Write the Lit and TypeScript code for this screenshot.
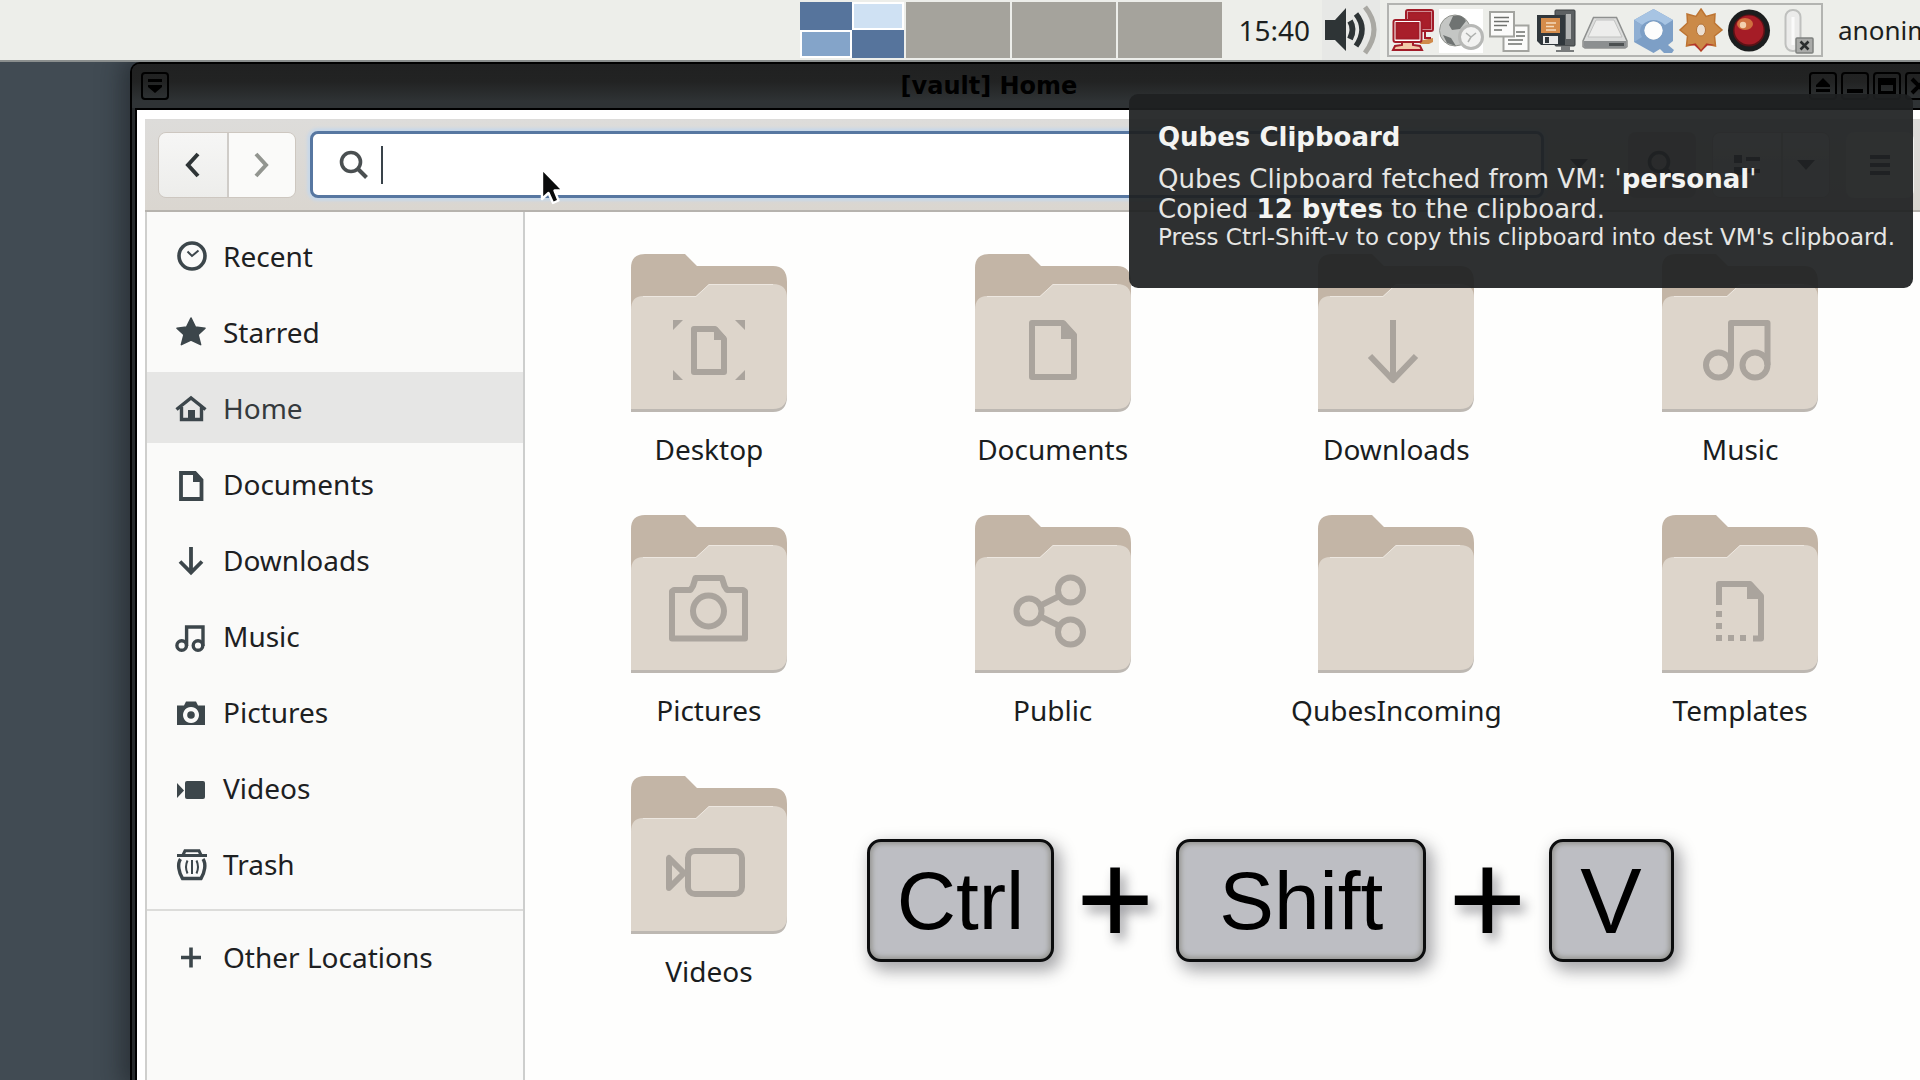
import { LitElement, html, css, svg, nothing } from "lit";
import { customElement, property } from "lit/decorators.js";
import { classMap } from "lit/directives/class-map.js";

/* ---------- glyphs ---------- */

const placeIcons: Record<string, unknown> = {
  recent: svg`<circle cx="17" cy="16" r="13" fill="none" stroke="currentColor" stroke-width="3.6"/>
    <path d="M12.5 11.5 17 16 23.5 10.5" fill="none" stroke="currentColor" stroke-width="2"/>`,
  starred: svg`<path d="M16 2 20.4 11 30 12.2 23 18.6 25.6 28.6 16 24 6.4 28.6 9 18.6 2 12.2 11.6 11Z" fill="currentColor" stroke="currentColor" stroke-width="1.6" stroke-linejoin="round"/>`,
  home: svg`<path d="M1.5 17.5 16 6 30.5 17.5M6.5 15V27.5H26.5V15" fill="none" stroke="currentColor" stroke-width="3.4"/>
    <path d="M13 18h7v10h-7z" fill="currentColor"/>`,
  documents: svg`<path d="M6 5H20L26.5 12V31H6Z" fill="none" stroke="currentColor" stroke-width="3.8"/>
    <path d="M18 4h3l7 8v2H18z" fill="currentColor"/>`,
  downloads: svg`<path d="M16 3V28M5 17.5 16 28.5 27 17.5" fill="none" stroke="currentColor" stroke-width="3.8"/>`,
  music: svg`<g fill="none" stroke="currentColor" stroke-width="3.4"><circle cx="6.7" cy="25.5" r="4.8"/><circle cx="23" cy="25.5" r="4.8"/><path d="M11.6 26V7H28V26"/></g>`,
  pictures: svg`<path fill-rule="evenodd" d="M2 9.5H9L11 5.5H21L23 9.5H30V29H2ZM16 11a8 8 0 1 0 .01 0Z" fill="currentColor"/><circle cx="16" cy="19" r="3.8" fill="currentColor"/>`,
  videos: svg`<rect x="10" y="9" width="20" height="18" rx="2" fill="currentColor"/><path d="M2 11V26L9 18.5Z" fill="currentColor"/>`,
  trash: svg`<path d="M2 7.5H32M8 7 10 2.8H24L26 7" fill="none" stroke="currentColor" stroke-width="3"/>
    <path d="M5.5 11C2 16 4 25 7.5 30.5H26C29.5 25 31.5 16 28 11" fill="none" stroke="currentColor" stroke-width="3.4"/>
    <path d="M12.5 12.5q-3 6.5 0 13M17 12v14M21.5 12.5q3 6.5 0 13" fill="none" stroke="currentColor" stroke-width="2"/>`,
  plus: svg`<path d="M16 6.5V26.5M6 16.5H26" fill="none" stroke="currentColor" stroke-width="3.6"/>`,
};

const folderMarks: Record<string, unknown> = {
  desktop: svg`<path d="M63 75H84L93 85V118H63Z"/><path class="solid" d="M83 73h3l9 10v3H83zM42 66h10l-10 10zM114 66h-10l10 10zM42 126h10l-10-10zM114 126h-10l10-10z"/>`,
  documents: svg`<path d="M57 69H88L99 81V123H57Z"/><path class="solid" d="M86 67h4l12 14v4H86z"/>`,
  downloads: svg`<path d="M75 66V124M52 102 75 126 98 102"/>`,
  music: svg`<circle cx="56.5" cy="111" r="12.5"/><circle cx="93" cy="111" r="12.5"/><path d="M69 111V69H105.5V111"/>`,
  pictures: svg`<path d="M41 123.5V76.5L43 75H59.5L62 71 64.5 63H91L93.5 71 96 75H112L114 76.5V123.5Z"/><circle cx="77.5" cy="96" r="15.5"/>`,
  public: svg`<circle cx="54" cy="96" r="12.5"/><circle cx="95.5" cy="75" r="12.5"/><circle cx="95.5" cy="117" r="12.5"/><path d="M65.5 90.5 84.5 81M65.5 101.5 84.5 111"/>`,
  templates: svg`<path d="M57 90V69H88L99 81V123.5H91"/><path class="solid" d="M85 67h4l12 14v3H85zM54 96h6v6h-6zM54 108h6v6h-6zM54 120h6v6h-6zM66 120h6v6h-6zM78 120h6v6h-6z"/>`,
  videos: svg`<rect x="57" y="75" width="54" height="43" rx="7"/><path d="M38 82V112L53 97Z"/>`,
};

const trayIcons: [string, unknown][] = [
  ["Network", svg`<path d="M30 36 44 33v4l-4 2h-9z" fill="#d08a4a"/>
    <g stroke="#a21c28" stroke-width="2"><rect x="17" y="5" width="27" height="21" rx="2" fill="#fff"/><rect x="19.5" y="7.5" width="22" height="16" fill="#a81e2a"/>
    <path d="M36 27v6h6" fill="none"/><rect x="4.5" y="15" width="28" height="22" rx="2" fill="#fff"/><rect x="7.5" y="18" width="22" height="15.5" fill="#a81e2a"/>
    <path d="M13 37h11v3l7 1 2 4H4l2-4 7-1z" fill="#f1c9a8"/></g>`],
  ["Clock synchronisation", svg`<rect x="2" y="4" width="44" height="44" fill="#fff"/><circle cx="18" cy="25.5" r="15.5" fill="#c4c6c4" stroke="#92948f"/>
    <path d="M16 11q9-2 13 5l-6 8-8 1-3-5zM6 30l8 3 5 8-9-3zM22 28l5 2-4 6z" fill="#6f7372"/><circle cx="34" cy="32" r="11.5" fill="#f2f2f1" stroke="#b7b8b6" stroke-width="3"/>
    <path d="M29 28l5 4 5-4M34 32l-3 5" fill="none" stroke="#aeb0ae" stroke-width="1.5"/>`],
  ["Clipboard", svg`<g fill="#fbfbfa" stroke="#a3a4a0" stroke-width="2"><rect x="18.5" y="20.5" width="25" height="25.5"/><rect x="5" y="7" width="24" height="24.5"/></g>
    <path d="M9 12.5h15M9 16.5h15M9 20.5h13M9 25h8M31 27h9M31 31h9M23 35h15M23 39h14" stroke="#6f716e" stroke-width="1.6"/>`],
  ["Devices", svg`<rect x="22" y="5" width="20" height="36" rx="1" fill="#5c6062" stroke="#3a3e40"/><rect x="33" y="9" width="5" height="25" fill="#b2b4b4"/><path d="M28 41h9v4h4v2H23v-2h5z" fill="#797c7d"/>
    <path d="M4 10h28v30H8l-4-4z" fill="#30373c"/><rect x="8" y="13" width="19" height="15" fill="#d58c4b"/><path d="M13 18h10M13 21.5h8M13 25h10" stroke="#f3d9bd" stroke-width="1.6"/>
    <rect x="10" y="31" width="15" height="8" fill="#e9eaea"/><rect x="12" y="32" width="4" height="6" fill="#30373c"/>`],
  ["Disk space", svg`<path d="M12.5 12.5h23L46 36v5.5l-2 1.5H4l-2-1.5V36z" fill="#dcdddc" stroke="#8e908f" stroke-width="1.5"/><path d="M15 15h18l8 17H7z" fill="#ededec" stroke="#c1c2c1"/>
    <path d="M2.5 36h43v5l-2 2H4.5l-2-2z" fill="#8c8f90"/><path d="M28 38h15v3H28z" fill="#4c5051"/>`],
  ["Qube Manager", svg`<path fill-rule="evenodd" d="M24.5 4 44 15V36L39 40l6 5-2 3h-8l-4-4-6.5 4L5 37V15ZM24.5 16.5a9 9 0 1 0 .01 0Z" fill="#7d9fc6"/>
    <path d="M24.5 4 44 15l-8 5q-11-10-23 0l-8-5z" fill="#a7c4e3"/><path d="M5 15l8 5q-4 6 0 12l-8 5z" fill="#8fafd3"/>
    <circle cx="24.5" cy="25.5" r="9" fill="#fdfdfd"/>`],
  ["Updates", svg`<path d="M24 4 29 11.5 38 9 37.5 18 45 25 37.5 31 38.5 41 29.5 39 24 46 18.5 39 9.5 41 10.5 31 3 25 10.5 18 10 9 19 11.5Z" fill="#cb8a48" stroke="#bd7432" stroke-width="1.5"/>
    <path d="M10 40l8.500-1.500 5.500 6.500 5.500-6.500 8.500 1.500-7.500.5-6.500 6-6.500-6z" fill="#b5342c"/><ellipse cx="24" cy="25" rx="4.5" ry="6" fill="#ecdfd2" stroke="#b3733a"/>`],
  ["Recorder", svg`<circle cx="24" cy="25.5" r="21" fill="#1b1d1e"/><circle cx="24" cy="25.5" r="16" fill="#5c1216"/><circle cx="24" cy="25" r="14.5" fill="#a51c26"/>
    <ellipse cx="20" cy="19" rx="8" ry="6" fill="#d0703f"/><circle cx="18" cy="20" r="3.2" fill="#f3d0ae"/>`],
  ["Removable media", svg`<rect x="12.5" y="5" width="15" height="41" rx="7" fill="#ebebea" stroke="#bfc0be" stroke-width="2"/><path d="M20 12v28" stroke="#fafafa" stroke-width="3"/>
    <rect x="23" y="33" width="17" height="15" rx="1" fill="#a9aaa8" stroke="#7f817f" stroke-width="1.5"/><path d="M27.5 36.5l8 8M35.5 36.5l-8 8" stroke="#2b2e2f" stroke-width="2.6"/>`],
];

const arrowDown = html`<svg width="20" height="12" viewBox="0 0 20 12" aria-hidden="true"><path d="M1 1h18l-9 10z" fill="currentColor"/></svg>`;

const magnifier = html`<svg width="30" height="30" viewBox="0 0 30 30" aria-hidden="true">
  <circle cx="12" cy="12" r="9.5" fill="none" stroke="currentColor" stroke-width="3.6"/>
  <path d="M18.5 18.5 27.5 27.5" stroke="currentColor" stroke-width="4"/></svg>`;

/* ---------- top panel ---------- */

@customElement("desktop-panel")
class DesktopPanel extends LitElement {
  static styles = css`
    :host { display: block; }
    .panel {
      display: flex; justify-content: flex-end; align-items: center;
      height: 60px; background: #edeeea; border-bottom: 2px solid #8b8f8e;
      font: 26px/34px "Noto Sans", sans-serif; color: #1c1f20;
    }
    .pager { display: grid; grid-template-columns: repeat(4, 104px); gap: 2px; }
    .desk { height: 56px; padding: 0; border: 0; background: #a5a39c; }
    .active { display: grid; grid-template-columns: 1fr 1fr; grid-template-rows: 1fr 1fr; background: #56749c; }
    .win { border: 2px solid #fff; }
    .light { grid-column: 2; background: #cfe1f3; }
    .mid { grid-row: 2; background: #84a4c9; }
    .clock { margin: 0 12px 0 16px; font-size: 28px; }
    .volume { padding: 0; border: 0; background: #e7e8e6; display: flex; }
    .tray { display: flex; margin: 0 15px 0 7px; border: 2px solid #b3b4b1; background: #edeeea; }
    .tray button { padding: 0; border: 0; background: none; display: flex; }
    .user { width: 82px; overflow: hidden; white-space: nowrap; }
  `;

  render() {
    return html`<header class="panel">
      <nav class="pager" aria-label="Workspaces">
        <button class="desk active" aria-label="Workspace 1"><span class="win light"></span><span class="win mid"></span></button>
        ${[2, 3, 4].map((n) => html`<button class="desk" aria-label=${`Workspace ${n}`}></button>`)}
      </nav>
      <time class="clock">15:40</time>
      <button class="volume" aria-label="Volume">
        <svg width="58" height="60" viewBox="0 0 58 60">
          <path d="M3 20h10L24 8V51L13 40H3Z" fill="#2e3436"/>
          <g fill="none"><path d="M28 21q5 8 0 18" stroke="#2e3436" stroke-width="6"/>
          <path d="M34 14q12 15 0 32" stroke="#2e3436" stroke-width="5.5"/>
          <path d="M43 7q18 22 0 46" stroke="#a9a8a3" stroke-width="5"/></g>
        </svg>
      </button>
      <div class="tray">
        ${trayIcons.map(([label, art]) => html`<button aria-label=${label}><svg width="48" height="50" viewBox="0 0 48 50">${art}</svg></button>`)}
      </div>
      <span class="user">anonim</span>
    </header>`;
  }
}

/* ---------- folder tile ---------- */

@customElement("folder-tile")
class FolderTile extends LitElement {
  @property() name = "";
  @property() mark = "";

  static styles = css`
    :host { display: block; }
    .tile {
      display: flex; flex-direction: column; align-items: center; gap: 18px; width: 100%;
      padding: 0; border: 0; background: none; color: #1a1d1e;
      font: 28px/38px "Noto Sans", sans-serif;
    }
    .back { fill: #c3b5a6; }
    .edge { fill: #bdb8b2; }
    .front { fill: #ddd5cb; }
    .shine { fill: none; stroke: #ede7e0; stroke-width: 1px; }
    .mark { fill: none; stroke: #aaa49d; stroke-width: 6px; stroke-linejoin: round; }
    .mark .solid { fill: #aaa49d; stroke: none; }
  `;

  render() {
    return html`<button class="tile">
      <svg width="156" height="158" viewBox="0 0 156 158" aria-hidden="true">
        <path class="back" d="M0 60V14Q0 0 14 0H54L66 12H142Q156 12 156 28V60Z"/>
        <path class="edge" d="M0 60H156V142Q156 158 142 158H0Z"/>
        <path class="front" d="M0 56Q0 42 12 42H65L78 30H142Q156 30 156 44V140Q156 155 142 155H0Z"/>
        <path class="shine" d="M12 42.5H65L78 30.5H142"/>
        <g class="mark">${this.mark ? folderMarks[this.mark] : nothing}</g>
      </svg>
      <span>${this.name}</span>
    </button>`;
  }
}

/* ---------- file manager window ---------- */

@customElement("file-window")
class FileWindow extends LitElement {
  private places = [
    ["Recent", "recent"], ["Starred", "starred"], ["Home", "home"], ["Documents", "documents"],
    ["Downloads", "downloads"], ["Music", "music"], ["Pictures", "pictures"], ["Videos", "videos"], ["Trash", "trash"],
  ];
  private folders = [
    ["Desktop", "desktop"], ["Documents", "documents"], ["Downloads", "downloads"], ["Music", "music"],
    ["Pictures", "pictures"], ["Public", "public"], ["QubesIncoming", ""], ["Templates", "templates"],
    ["Videos", "videos"],
  ];

  static styles = css`
    :host { display: flex; flex-direction: column; }
    button { padding: 0; border: 0; background: none; color: inherit; font: inherit; }
    .frame {
      flex: 1; display: flex; flex-direction: column;
      border: 2px solid #000; border-bottom: 0; border-radius: 10px 10px 0 0; background: #26292b;
      box-shadow: 0 0 24px 8px rgba(20, 24, 27, 0.5);
    }
    .titlebar {
      display: grid; grid-template-columns: auto 1fr auto; align-items: center;
      height: 44px; padding: 0 5px 0 9px; border-radius: 8px 8px 0 0;
      background: linear-gradient(#202121, #222323 40%, #2f3335 85%);
    }
    .title { margin: 0; font: bold 24px/30px "DejaVu Sans", sans-serif; color: #000; text-align: center; }
    .wbtn { width: 28px; height: 28px; display: flex; align-items: center; justify-content: center; border: 2px solid #000; border-radius: 4px; box-sizing: border-box; color: #000; }
    .wbtns { display: flex; gap: 4px; justify-content: flex-end; }
    .body {
      flex: 1; display: flex; flex-direction: column; margin-left: 3px;
      border: solid #000; border-width: 2px 0 0 2px; background: #fff; padding: 9px 0 0 8px;
    }
    .toolbar {
      display: flex; align-items: center; gap: 14px; height: 93px; box-sizing: border-box;
      padding: 0 24px 0 13px; background: linear-gradient(#dddcda, #dad6d0);
      border-bottom: 2px solid #b6b3ae; color: #2e3436;
    }
    .pair { display: flex; height: 66px; border: 1px solid #cdc7c0; border-radius: 8px; overflow: hidden; box-sizing: border-box; }
    .pair button { display: flex; align-items: center; justify-content: center; width: 68px; background: linear-gradient(#f6f6f5, #ededeb); }
    .pair button + button { border-left: 2px solid #cfccc8; }
    .pair .off { background: #fafaf9; color: #929590; }
    .pair .slim { width: 48px; }
    .path { flex: 1; display: flex; gap: 8px; padding-right: 8px; }
    .entry {
      flex: 1; display: flex; align-items: center; height: 67px; box-sizing: border-box; padding: 0 26px;
      background: #fff; border: 3px solid #5777a1; border-radius: 8px; box-shadow: 0 0 3px 3px #c9d8e8; color: #4a4f51;
    }
    .caret { width: 2px; height: 38px; margin-left: 12px; background: #39434a; }
    .entry input { flex: 1; min-width: 0; padding: 0; border: 0; outline: 0; background: none; font: 28px/38px "Noto Sans", sans-serif; caret-color: transparent; }
    .tools { display: flex; gap: 16px; }
    .square { width: 68px; height: 66px; display: flex; align-items: center; justify-content: center; border-radius: 8px; }
    .raised { background: #f3f3f1; }
    .pressed { background: #bfbbb5; }
    .narrow { width: 54px; }
    .columns { flex: 1; display: flex; border-left: 2px solid #cfcfcd; }
    .sidebar {
      width: 378px; box-sizing: border-box; flex: none; display: flex; flex-direction: column; gap: 5px; padding-top: 8px;
      background: #fafaf9; border-right: 2px solid #cdcecd;
    }
    .place {
      display: flex; align-items: center; gap: 16px; height: 71px; padding-left: 28px;
      color: #3c464b; text-decoration: none;
    }
    .place span { font: 28px/38px "Noto Sans", sans-serif; color: #1d2022; }
    .place svg { overflow: visible; }
    .current { background: #e6e6e5; }
    .current span { color: #353a3d; }
    .rule { width: 100%; margin: 5px 0; border: 0; border-top: 2px solid #dcdcda; }
    .canvas {
      flex: 1; display: grid; grid-template-columns: repeat(4, 1fr); align-content: start; row-gap: 47px;
      padding: 42px 26px 20px 12px; background: #fefefd;
    }
  `;

  render() {
    return html`<section class="frame">
      <div class="titlebar">
        <button class="wbtn" aria-label="Window menu"><svg width="16" height="16" viewBox="0 0 16 16"><path d="M1 1h14v3H1zM1 7h14v2l-7 6-7-6z" fill="currentColor"/></svg></button>
        <h1 class="title">[vault] Home</h1>
        <div class="wbtns">
          <button class="wbtn" aria-label="Shade"><svg width="16" height="16" viewBox="0 0 16 16"><path d="M8 0l7 7v2H1V7zM1 11h14v3H1z" fill="currentColor"/></svg></button>
          <button class="wbtn" aria-label="Minimise"><svg width="18" height="16" viewBox="0 0 18 16"><path d="M1 11h16v4H1z" fill="currentColor"/></svg></button>
          <button class="wbtn" aria-label="Maximise"><svg width="18" height="18" viewBox="0 0 18 18"><path fill-rule="evenodd" d="M0 1h18v16H0zM3 8v6h12V8z" fill="currentColor"/></svg></button>
          <button class="wbtn" aria-label="Close"><svg width="18" height="18" viewBox="0 0 18 18"><path d="M2 2l14 14M16 2L2 16" stroke="currentColor" stroke-width="4"/></svg></button>
        </div>
      </div>
      <div class="body">
        <div class="toolbar">
          <div class="pair">
            <button aria-label="Back"><svg width="20" height="26" viewBox="0 0 20 26"><path d="M15 2 5 13 15 24" fill="none" stroke="currentColor" stroke-width="4"/></svg></button>
            <button class="off" aria-label="Forward"><svg width="20" height="26" viewBox="0 0 20 26"><path d="M4 2 14 13 4 24" fill="none" stroke="currentColor" stroke-width="4"/></svg></button>
          </div>
          <div class="path">
            <label class="entry">${magnifier}<span class="caret"></span><input type="text" aria-label="Search files" /></label>
            <button class="square narrow" aria-label="Search options">${arrowDown}</button>
          </div>
          <div class="tools">
            <button class="square pressed" aria-label="Toggle search">${magnifier}</button>
            <div class="pair">
              <button aria-label="List view"><svg width="26" height="20" viewBox="0 0 26 20"><path d="M0 0h8v8H0zM12 2h14v4H12zM0 12h8v8H0zM12 14h14v4H12z" fill="currentColor"/></svg></button>
              <button class="slim" aria-label="View options">${arrowDown}</button>
            </div>
            <button class="square raised" aria-label="Menu"><svg width="20" height="20" viewBox="0 0 20 20"><path d="M0 0h20v4H0zM0 8h20v4H0zM0 16h20v4H0z" fill="currentColor"/></svg></button>
          </div>
        </div>
        <div class="columns">
          <nav class="sidebar" aria-label="Places">
            ${this.places.map(([name, icon]) => this.place(name, icon))}
            <hr class="rule" />
            ${this.place("Other Locations", "plus")}
          </nav>
          <main class="canvas">
            ${this.folders.map(([name, mark]) => html`<folder-tile .name=${name} .mark=${mark}></folder-tile>`)}
          </main>
        </div>
      </div>
    </section>`;
  }

  private place(name: string, icon: string) {
    return html`<a href="#" class=${classMap({ place: true, current: name === "Home" })}>
      <svg width="32" height="32" viewBox="0 0 32 32" aria-hidden="true">${placeIcons[icon]}</svg><span>${name}</span>
    </a>`;
  }
}

/* ---------- desktop ---------- */

@customElement("app-root")
class AppRoot extends LitElement {
  static styles = css`
    :host { display: block; }
    .desktop {
      position: relative; display: flex; flex-direction: column; height: 100vh; overflow: hidden;
      background: #414b53;
    }
    desktop-panel { z-index: 1; }
    file-window { flex: 1; margin: 0 -20px 0 130px; }
    .notice {
      position: absolute; z-index: 2; top: 94px; right: 7px; box-sizing: border-box; width: 784px;
      padding: 28px 29px 38px; border-radius: 9px; background: rgba(30, 32, 33, 0.93); color: #e6e6e4;
      font: 26px/30px "DejaVu Sans", sans-serif; white-space: nowrap;
    }
    .notice h2 { margin: 0 0 12px; font-size: 26px; line-height: 30px; color: #f4f4f2; }
    .notice p { margin: 0; }
    .notice b { color: #f4f4f2; }
    .notice .hint { font-size: 23px; line-height: 26px; }
    .keys {
      position: absolute; z-index: 2; left: 867px; top: 839px; display: flex; align-items: center; gap: 22px;
      font: 82px/92px "Liberation Sans", Arial, sans-serif; color: #000;
    }
    .key {
      box-sizing: border-box; height: 123px; display: flex; align-items: center; justify-content: center;
      font: inherit; border: 3px solid #0c0d0e; border-radius: 14px; background: #bdbec3;
      box-shadow: inset 0 0 5px 2px #94948f, 5px 7px 16px 2px rgba(40, 40, 50, 0.4);
    }
    .ctrl { width: 187px; }
    .shift { width: 250px; }
    .letter { width: 125px; font-size: 92px; }
    .plus { padding-bottom: 4px; font-size: 134px; text-shadow: 5px 7px 12px rgba(40, 40, 50, 0.45); }
    .pointer { position: absolute; z-index: 3; left: 540px; top: 166px; }
  `;

  render() {
    return html`<div class="desktop">
      <desktop-panel></desktop-panel>
      <file-window></file-window>
      <aside class="notice" role="status">
        <h2>Qubes Clipboard</h2>
        <p>Qubes Clipboard fetched from VM: '<b>personal</b>'</p>
        <p>Copied <b>12 bytes</b> to the clipboard.</p>
        <p class="hint">Press Ctrl-Shift-v to copy this clipboard into dest VM's clipboard.</p>
      </aside>
      <div class="keys">
        <kbd class="key ctrl">Ctrl</kbd><span class="plus">+</span><kbd class="key shift">Shift</kbd><span class="plus">+</span><kbd class="key letter">V</kbd>
      </div>
      <svg class="pointer" width="26" height="40" viewBox="0 0 26 40" aria-hidden="true">
        <path d="M2 3V33L8.500 27 13 37 18.500 34.500 14.500 24.500H23Z" fill="#0a0b0c" stroke="#fff" stroke-width="2.4" stroke-linejoin="round"/>
      </svg>
    </div>`;
  }
}
